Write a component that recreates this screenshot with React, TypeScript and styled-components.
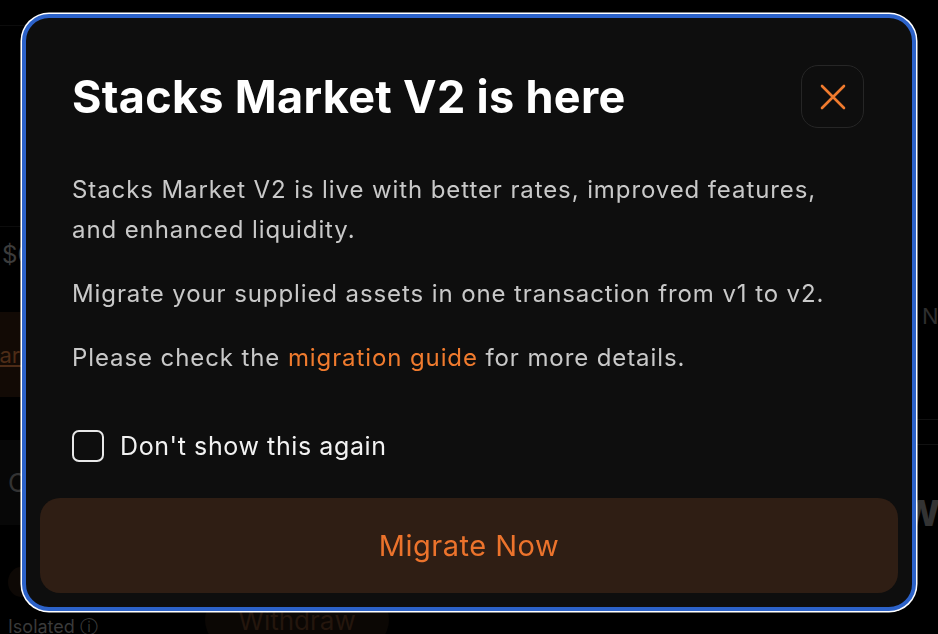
import React from "react";
import styled, { createGlobalStyle } from "styled-components";

const GlobalStyle = createGlobalStyle`
  * { box-sizing: border-box; }
  html, body { margin: 0; padding: 0; background: #000; }
  body { font-family: Inter, "Noto Sans", sans-serif; overflow: hidden; }
`;

const App = () => {
  return (
    <>
      <GlobalStyle />
      <Page>
        <LeftCol>
          <TopLine />
          <Amount>$0</Amount>
          <LearnBlock>
            <LearnLink>Learn</LearnLink>
          </LearnBlock>
          <GreyRow>C</GreyRow>
          <Dot />
          <Isolated>Isolated ⓘ</Isolated>
        </LeftCol>
        <MidCol>
          <WithdrawPill>Withdraw</WithdrawPill>
        </MidCol>
        <RightCol>
          <RightLetter>N</RightLetter>
          <RightLine />
          <RightLine />
          <BigLetter>W</BigLetter>
        </RightCol>
      </Page>

      <Overlay>
        <Modal>
          <Body>
            <Header>
              <Title>Stacks Market V2 is here</Title>
              <CloseButton aria-label="Close">
                <svg width="26" height="26" viewBox="0 0 26 26" fill="none">
                  <path
                    d="M2 2 L24 24 M24 2 L2 24"
                    stroke="#f07b2e"
                    strokeWidth="2.6"
                    strokeLinecap="round"
                  />
                </svg>
              </CloseButton>
            </Header>
            <Text>
              Stacks Market V2 is live with better rates, improved features,
              <br />
              and enhanced liquidity.
            </Text>
            <Text>Migrate your supplied assets in one transaction from v1 to v2.</Text>
            <Text>
              Please check the <Link href="#">migration guide</Link> for more details.
            </Text>
            <CheckRow>
              <Box />
              <CheckLabel>Don't show this again</CheckLabel>
            </CheckRow>
          </Body>
          <MigrateButton>Migrate Now</MigrateButton>
        </Modal>
      </Overlay>
    </>
  );
};

export default App;

const Page = styled.div`
  display: flex;
  height: 100vh;
  width: 100%;
  background: #000;
  overflow: hidden;
`;

const LeftCol = styled.div`
  width: 200px;
  display: flex;
  flex-direction: column;
  & > * { flex-shrink: 0; }
`;

const TopLine = styled.div`
  margin-top: 25px;
  height: 202px;
  border-top: 1px solid #0c0c0c;
  border-bottom: 1px solid #0c0c0c;
`;

const Amount = styled.div`
  height: 54px;
  padding-left: 2px;
  display: flex;
  align-items: center;
  font-size: 24px;
  color: #3c3c3c;
`;

const LearnBlock = styled.div`
  margin-top: 31px;
  height: 85px;
  background: #120a05;
  display: flex;
  align-items: center;
`;

const LearnLink = styled.span`
  margin-left: -26px;
  font-size: 22px;
  color: #4d2c17;
  text-decoration: underline;
`;

const GreyRow = styled.div`
  margin-top: 43px;
  height: 85px;
  background: #070707;
  display: flex;
  align-items: center;
  padding-left: 8px;
  font-size: 26px;
  color: #333;
`;

const Dot = styled.div`
  margin: 42px 0 0 8px;
  width: 26px;
  height: 30px;
  border-radius: 50%;
  background: #0d0805;
`;

const Isolated = styled.div`
  margin: 18px 0 0 8px;
  font-size: 18px;
  color: #3a3a3a;
`;

const MidCol = styled.div`
  flex: 1;
  display: flex;
  flex-direction: column;
  justify-content: flex-end;
  padding-left: 5px;
`;

const WithdrawPill = styled.div`
  width: 184px;
  height: 56px;
  margin-bottom: -14px;
  border-radius: 28px;
  background: #0b0704;
  color: #24160d;
  font-size: 26px;
  display: flex;
  align-items: center;
  justify-content: center;
`;

const RightCol = styled.div`
  width: 30px;
  display: flex;
  flex-direction: column;
  padding-top: 80px;
  border-top: 1px solid transparent;
`;

const RightLetter = styled.div`
  margin-top: 222px;
  padding-left: 14px;
  font-size: 22px;
  color: #2e2e2e;
`;

const RightLine = styled.div`
  margin-top: 90px;
  border-top: 1px solid #111;
  &:nth-of-type(3) { margin-top: 24px; }
`;

const BigLetter = styled.div`
  margin-top: 46px;
  margin-left: -6px;
  font-size: 36px;
  font-weight: 800;
  color: #333;
`;

const Overlay = styled.div`
  position: fixed;
  inset: 0;
  display: flex;
  justify-content: center;
  align-items: flex-start;
  padding-top: 14px;
`;

const Modal = styled.div`
  width: 894px;
  background: #0e0e0e;
  border: 4px solid #2c62c9;
  border-radius: 27px;
  box-shadow: 0 0 0 1.5px #ffffff;
  padding: 0 14px 14px;
  display: flex;
  flex-direction: column;
`;

const Body = styled.div`
  padding: 47px 32px 0;
  display: flex;
  flex-direction: column;
`;

const Header = styled.div`
  display: flex;
  justify-content: space-between;
  align-items: center;
  margin-bottom: 42px;
`;

const Title = styled.h1`
  margin: 0;
  font-size: 45px;
  font-weight: 700;
  color: #ffffff;
  letter-spacing: 0.3px;
`;

const CloseButton = styled.button`
  width: 63px;
  height: 63px;
  margin-right: 2px;
  border-radius: 17px;
  border: 1.5px solid #262626;
  background: #0e0e0e;
  display: flex;
  align-items: center;
  justify-content: center;
  padding: 0;
  cursor: pointer;
`;

const Text = styled.p`
  margin: 0 0 24px;
  font-size: 24px;
  line-height: 40px;
  letter-spacing: 0.9px;
  color: #c9c9c9;
  &:last-of-type { margin-bottom: 0; }
`;

const Link = styled.a`
  color: #f07b2e;
  text-decoration: none;
`;

const CheckRow = styled.label`
  display: flex;
  align-items: center;
  gap: 16px;
  margin-top: 52px;
  cursor: pointer;
`;

const Box = styled.span`
  width: 32px;
  height: 32px;
  border: 2px solid #e8e8e8;
  border-radius: 7px;
`;

const CheckLabel = styled.span`
  font-size: 25px;
  letter-spacing: 0.6px;
  color: #f2f2f2;
`;

const MigrateButton = styled.button`
  margin-top: 36px;
  height: 95px;
  width: 100%;
  border: none;
  border-radius: 20px;
  background: #2f1e14;
  color: #ec732c;
  font-family: Inter, "Noto Sans", sans-serif;
  font-size: 29px;
  letter-spacing: 0.5px;
  cursor: pointer;
`;
